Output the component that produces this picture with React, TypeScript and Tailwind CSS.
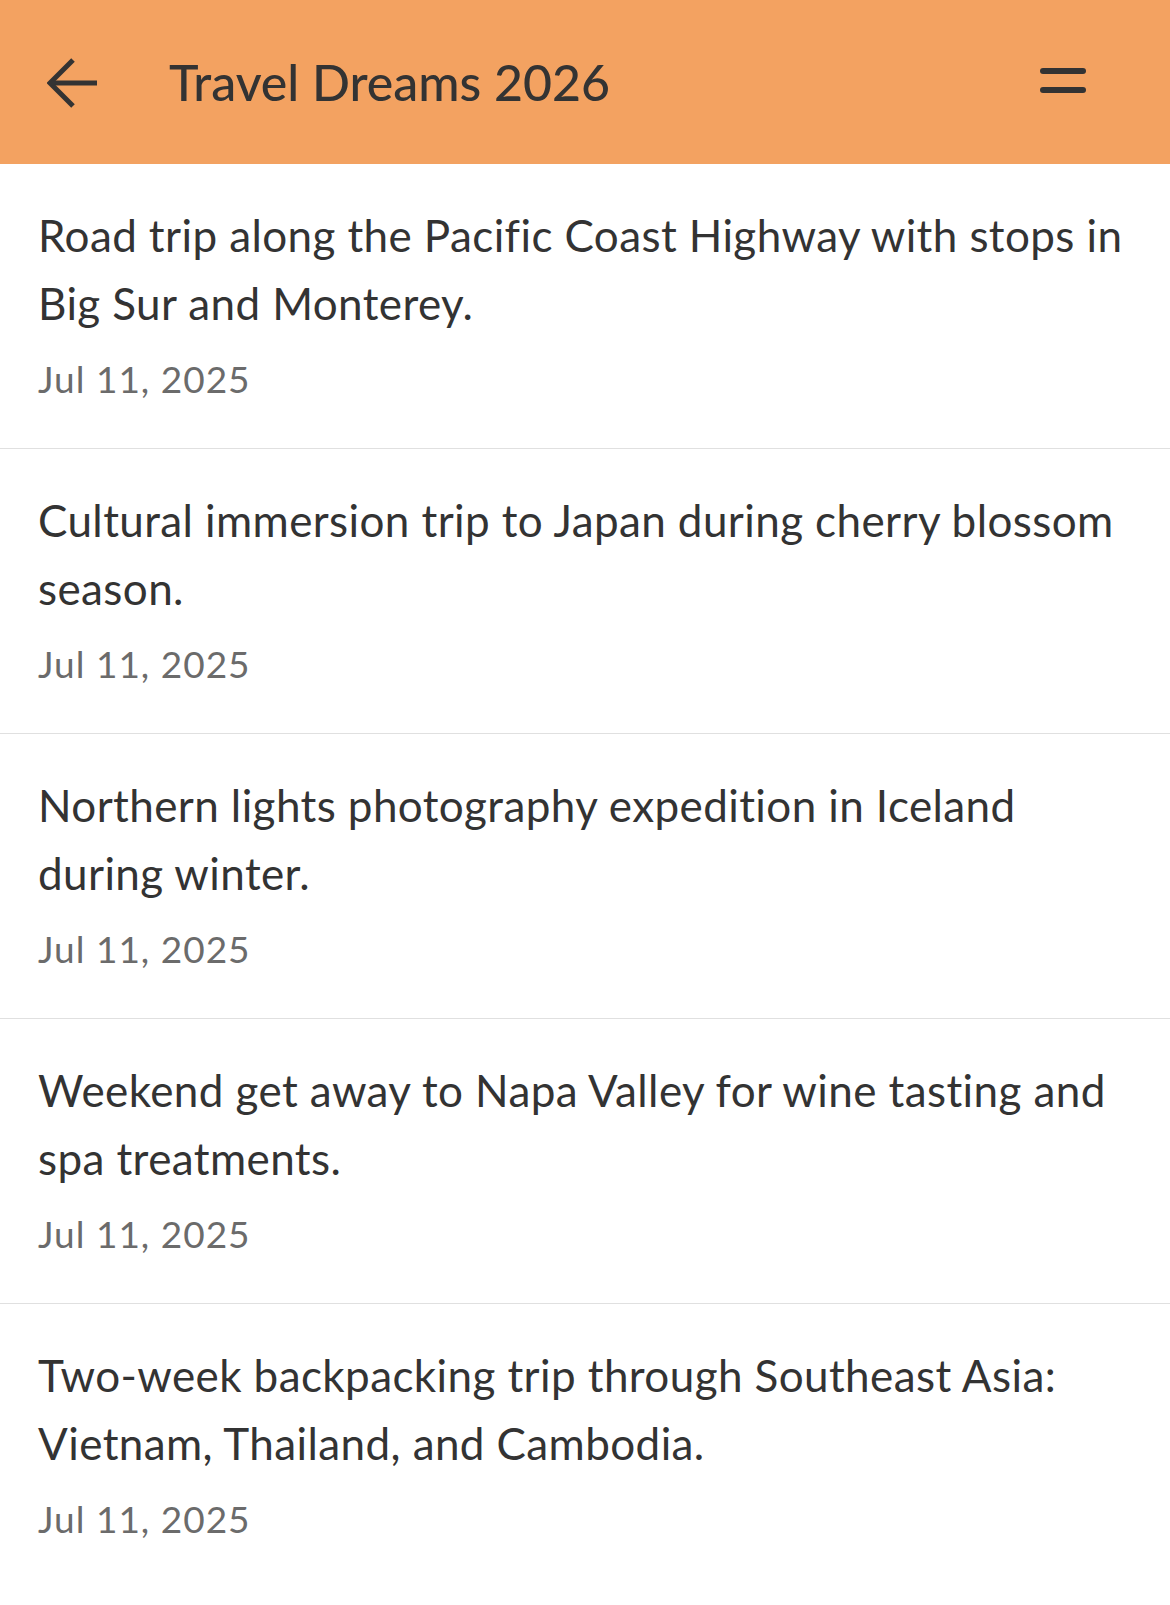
import React from "react";

type Entry = { lines: string[]; date: string };

const entries: Entry[] = [
  {
    lines: ["Road trip along the Pacific Coast Highway with stops in", "Big Sur and Monterey."],
    date: "Jul 11, 2025",
  },
  {
    lines: ["Cultural immersion trip to Japan during cherry blossom", "season."],
    date: "Jul 11, 2025",
  },
  {
    lines: ["Northern lights photography expedition in Iceland", "during winter."],
    date: "Jul 11, 2025",
  },
  {
    lines: ["Weekend get away to Napa Valley for wine tasting and", "spa treatments."],
    date: "Jul 11, 2025",
  },
  {
    lines: ["Two-week backpacking trip through Southeast Asia:", "Vietnam, Thailand, and Cambodia."],
    date: "Jul 11, 2025",
  },
];

function BackArrow() {
  return (
    <svg width="52" height="50" viewBox="0 0 52 50" fill="none">
      <path d="M26 2 L3 25 L26 48" stroke="#333333" strokeWidth="5" strokeLinejoin="miter" />
      <path d="M4 25 H50" stroke="#333333" strokeWidth="5" />
    </svg>
  );
}

function MenuIcon() {
  return (
    <svg width="46" height="28" viewBox="0 0 46 28" fill="none">
      <path d="M3 4 H43" stroke="#333333" strokeWidth="6" strokeLinecap="round" />
      <path d="M3 23 H43" stroke="#333333" strokeWidth="6" strokeLinecap="round" />
    </svg>
  );
}

function EntryRow({ entry, last }: { entry: Entry; last: boolean }) {
  return (
    <div className={"px-[38px] pt-[37px] pb-[49px] " + (last ? "" : "border-b border-[#e0e0e0]")}>
      <div className="text-[44px] leading-[68px] tracking-[0.4px] text-[#333333]">
        {entry.lines.map((l, i) => (
          <div key={i} className="whitespace-nowrap">
            {l}
          </div>
        ))}
      </div>
      <div className="mt-[22px] text-[37px] leading-[40px] tracking-[1px] text-[#6b6b6b]">{entry.date}</div>
    </div>
  );
}

export default function App() {
  return (
    <div className="min-h-screen bg-white font-['Lato',sans-serif]">
      <header className="h-[164px] bg-[#f3a261] flex items-center">
        <div className="pl-[47px] pt-[2px]">
          <BackArrow />
        </div>
        <h1 className="ml-[70px] text-[50px] font-medium text-[#333333] leading-none">Travel Dreams 2026</h1>
        <div className="ml-auto mr-[84px] mt-[-2px]">
          <MenuIcon />
        </div>
      </header>
      <main>
        {entries.map((e, i) => (
          <EntryRow key={i} entry={e} last={i === entries.length - 1} />
        ))}
      </main>
    </div>
  );
}
